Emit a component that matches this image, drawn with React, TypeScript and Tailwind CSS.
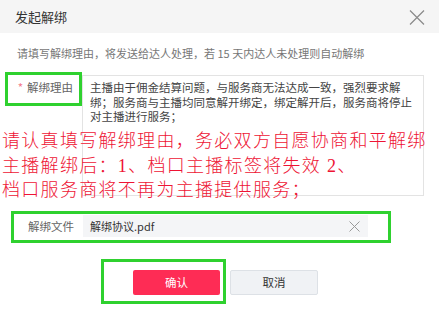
import React from "react";

const ui = { fontFamily: '"Noto Sans CJK SC", "Noto Sans", sans-serif' };
const red = { fontFamily: '"Liberation Serif", "Noto Sans CJK SC", serif' };

export default function App() {
  return (
    <div className="relative w-[439px] h-[311px] overflow-hidden bg-white" style={ui}>
      <div className="flex h-[33px] items-center justify-between bg-[#f5f5f5] pl-[15px] pr-[14px]">
        <span className="text-[13px] leading-none text-[#333]">发起解绑</span>
        <svg width="16" height="15" viewBox="0 0 16 15" className="mt-[1px]">
          <path d="M1 0.5 L15 14.5 M15 0.5 L1 14.5" stroke="#8a8a8a" strokeWidth="1.2" fill="none" />
        </svg>
      </div>

      <div className="pl-[17px] pt-[12px] text-[11px] leading-[16px] text-[#777]">
        请填写解绑理由，将发送给达人处理，若 15 天内达人未处理则自动解绑
      </div>

      <div className="mt-[14px] flex">
        <div className="w-[82px] shrink-0 pr-[9px] pt-[5px] text-right text-[11.5px] leading-[14px] text-[#666]">
          <span className="mr-[4px] text-[#f47a8c]">*</span>解绑理由
        </div>
        <div className="h-[121px] w-[342px] border border-[#e3e3e3] pl-[7px] pt-[4px] text-[11.5px] leading-[14.5px] text-[#444]">
          <div className="whitespace-nowrap">主播由于佣金结算问题，与服务商无法达成一致，强烈要求解</div>
          <div className="whitespace-nowrap">绑；服务商与主播均同意解开绑定，绑定解开后，服务商将停止</div>
          <div className="whitespace-nowrap">对主播进行服务；</div>
        </div>
      </div>

      <div className="mt-[19px] flex items-center">
        <div className="w-[83px] shrink-0 pl-[28px] text-[11.5px] leading-[14px] text-[#666]">解绑文件</div>
        <div className="flex h-[22px] w-[285px] items-center justify-between bg-[#f4f5f7] pl-[7px] pr-[8px]">
          <span className="text-[11px] text-[#333]">解绑协议.pdf</span>
          <svg width="11" height="11" viewBox="0 0 11 11">
            <path d="M0.5 0.5 L10.5 10.5 M10.5 0.5 L0.5 10.5" stroke="#999" strokeWidth="1" fill="none" />
          </svg>
        </div>
      </div>

      <div className="mt-[33px] flex gap-[10px] pl-[133px]">
        <div className="flex h-[25px] w-[87px] items-center justify-center rounded-[2px] bg-[#fe2c55] text-[11.5px] text-white">
          确认
        </div>
        <div className="flex h-[25px] w-[88px] items-center justify-center rounded-[2px] border border-[#dde1e6] bg-[#f0f2f5] text-[11.5px] text-[#333]">
          取消
        </div>
      </div>

      {/* annotation overlays */}
      <div
        className="absolute left-[2px] top-[129px] text-[18px] font-light leading-[24.5px] tracking-[1.3px] whitespace-nowrap text-[#ee1434]"
        style={red}
      >
        <div>请认真填写解绑理由，务必双方自愿协商和平解绑</div>
        <div>主播解绑后：1、档口主播标签将失效 2、</div>
        <div>档口服务商将不再为主播提供服务；</div>
      </div>

      <div className="pointer-events-none absolute left-[5px] top-[72px] h-[34px] w-[77px] border-[3px] border-[#2fd12f]" />
      <div className="pointer-events-none absolute left-[11px] top-[211px] h-[32px] w-[380px] border-[3px] border-[#2fd12f]" />
      <div className="pointer-events-none absolute left-[101px] top-[259px] h-[45px] w-[125px] border-[3px] border-[#2fd12f]" />
    </div>
  );
}
